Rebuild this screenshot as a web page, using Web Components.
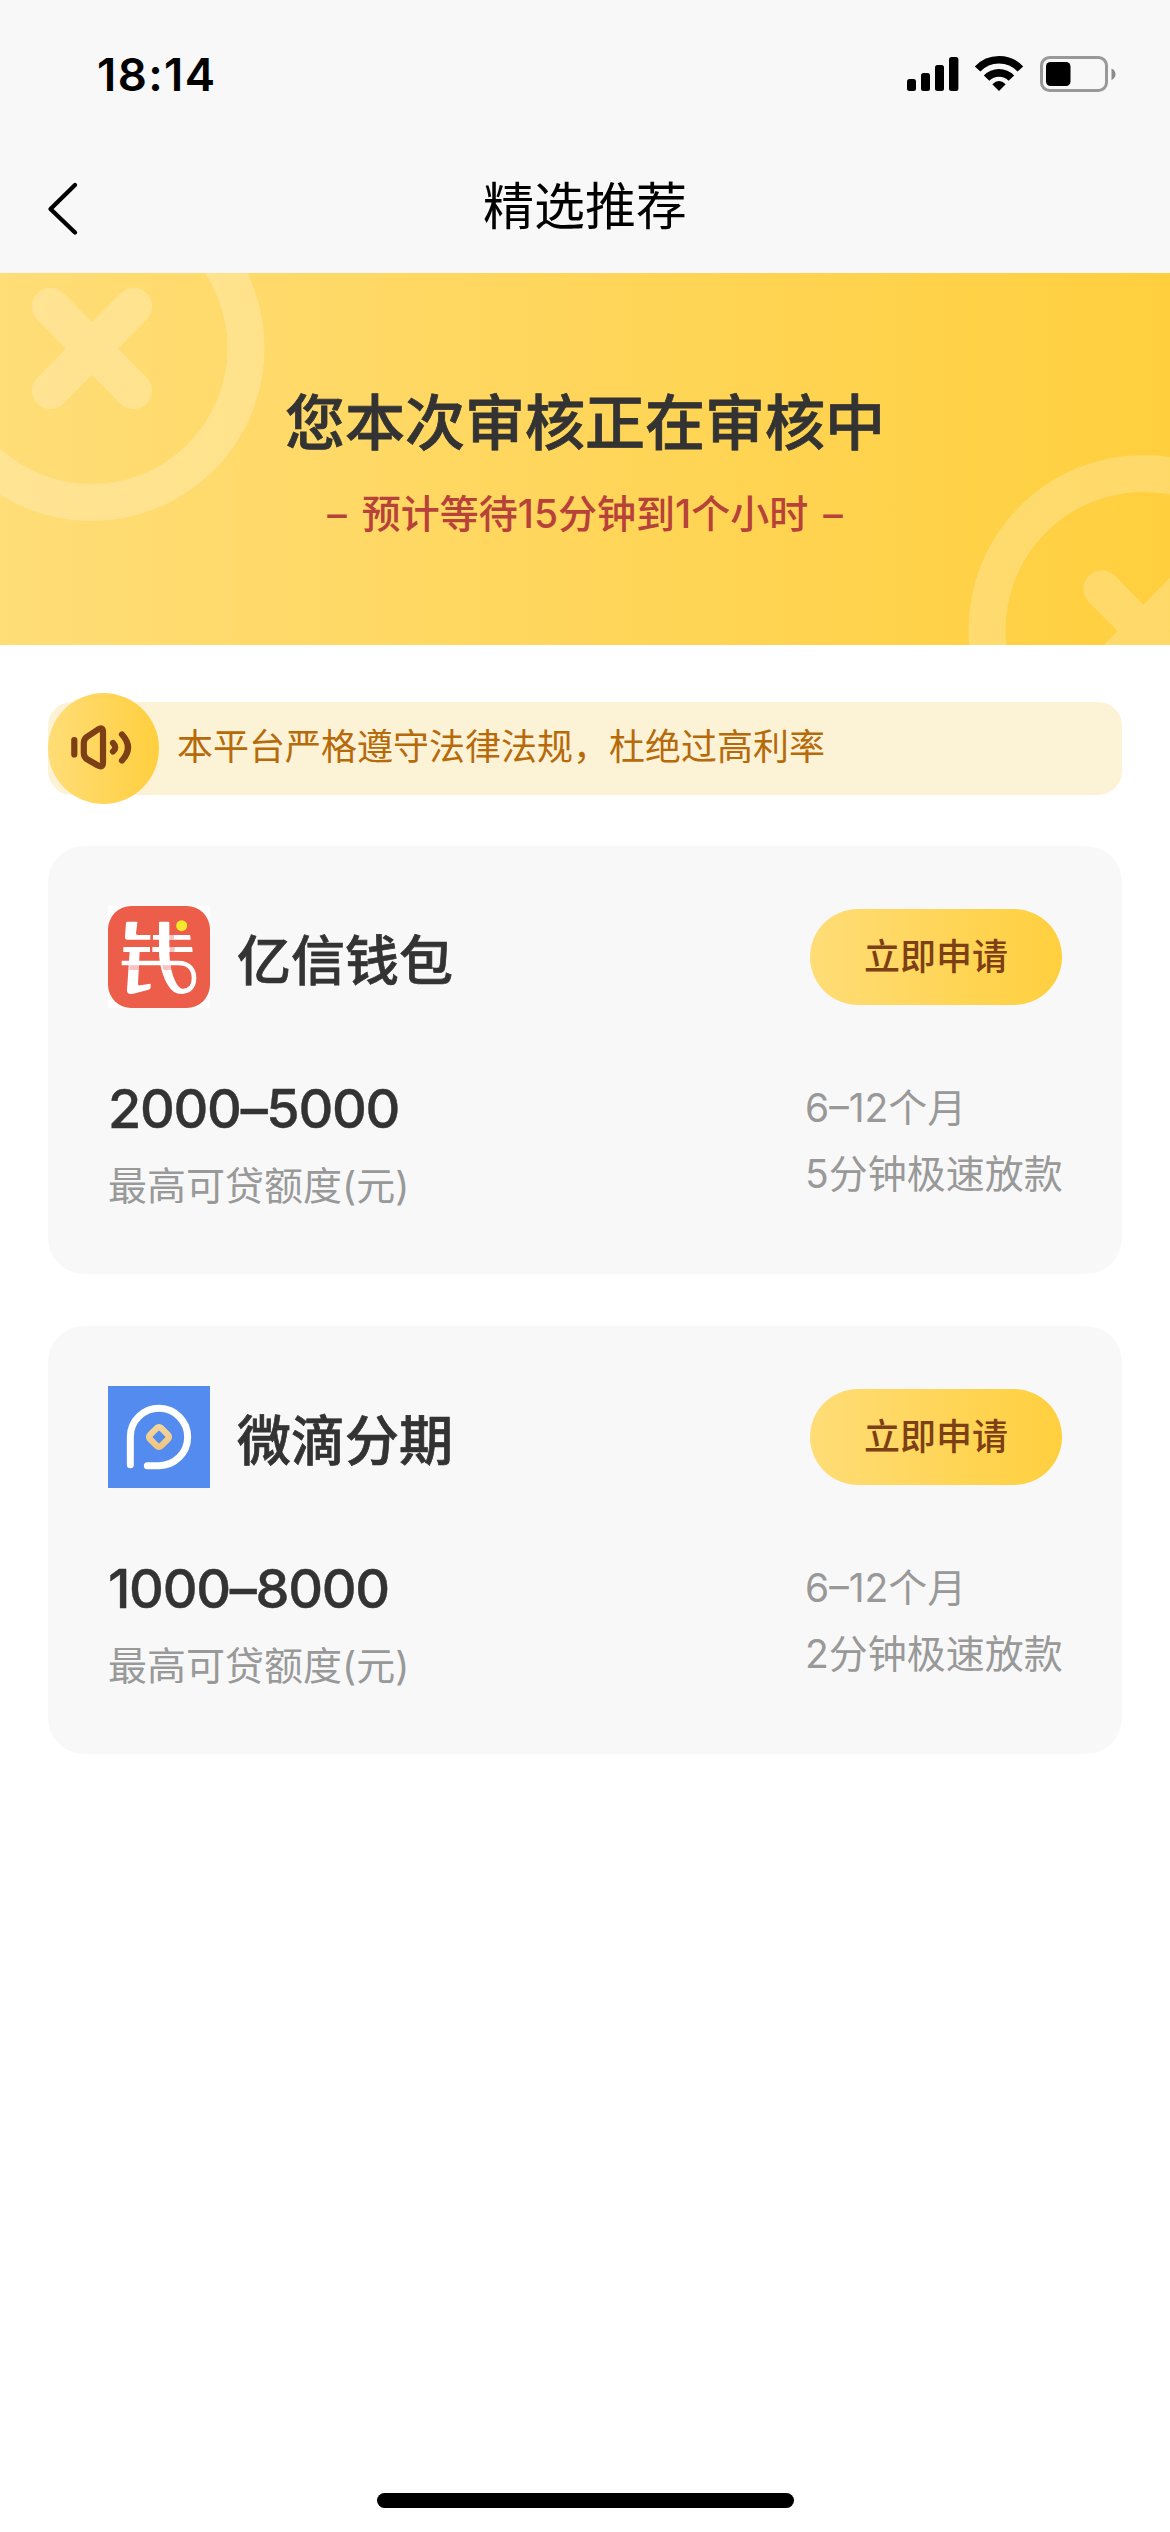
<!DOCTYPE html>
<html lang="zh-CN">
<head>
<meta charset="utf-8">
<title>精选推荐</title>
<style>
html,body{margin:0;padding:0;background:#fff}
body{width:1170px;height:2532px;overflow:hidden;font-family:Inter,"Noto Sans CJK SC",sans-serif}
</style>
</head>
<body>
<loan-app></loan-app>
<script>
const define=(name,html)=>customElements.define(name,class extends HTMLElement{
  constructor(){super();this.attachShadow({mode:'open'}).innerHTML=html;}
});

define('status-bar',`<style>
:host{display:flex;height:147px;box-sizing:border-box;padding:0 54px 0 97px;justify-content:space-between;align-items:center;background:#f8f8f8;color:#000}
time{font-size:45.5px;font-weight:600;line-height:60px;letter-spacing:1.400px;margin-top:2px}
svg{display:block}
</style>
<time>18:14</time>
<svg width="210" height="40" viewBox="906 54 210 40">
<rect x="907" y="79" width="9" height="12" rx="2.5"/><rect x="921" y="73" width="9" height="18" rx="2.5"/><rect x="935" y="65" width="9" height="26" rx="2.5"/><rect x="949" y="57" width="9.4" height="34" rx="2.5"/>
<g fill="none" stroke="#000" stroke-width="7.6"><path d="M977.6 69A29.3 29.3 0 0 1 1020.4 69"/><path d="M986.600 78.200A17 17 0 0 1 1011.400 78.200"/></g>
<path d="M992.3 84.2Q999 77.600 1005.700 84.2L999 91Z"/>
<rect x="1041.500" y="57.500" width="65" height="33" rx="8" fill="none" stroke="#999" stroke-width="3"/>
<rect x="1046" y="62" width="24.500" height="24" rx="4.500"/><path d="M1111.500 68.500Q1115.500 70.500 1115.500 74.200T1111.500 80Z" fill="#8b8b8b"/>
</svg>`);

define('nav-bar',`<style>
:host{display:grid;grid-template-columns:120px 1fr 120px;height:126px;align-items:center;background:#f8f8f8;color:#000}
svg{display:block;margin:0 0 3px 44px}
h1{margin:0 0 6px;text-align:center;font-size:51px;line-height:70px;font-weight:400}
</style>
<svg width="40" height="60" viewBox="44 179 40 60"><path d="M75 185L50.500 209L75 232.500" fill="none" stroke="#000" stroke-width="4.300" stroke-linecap="round" stroke-linejoin="round"/></svg>
<h1><slot></slot></h1>`);

define('review-banner',`<style>
:host{display:grid;height:372px;background:linear-gradient(90deg,#ffdd77,#ffcf3e);overflow:hidden}
svg,.copy{grid-area:1/1}
svg{display:block}
.copy{display:flex;flex-direction:column;align-items:center;padding-top:108px}
.title{font-size:60px;line-height:84px;font-weight:500;color:#333;-webkit-text-stroke:.8px #333}
.sub{font-size:39px;line-height:60px;margin-top:19px;font-weight:500;color:#b7423a;white-space:pre;word-spacing:4.500px}
</style>
<svg width="1170" height="372" viewBox="0 273 1170 372"><g fill="none" stroke="#fff" stroke-opacity=".22" stroke-width="37" stroke-linecap="round">
<circle cx="91.500" cy="348" r="154.500"/><path d="M50.500 306.500L133.500 390.500M133.500 306.500L50.500 390.500"/>
<circle cx="1143.500" cy="630" r="156.500"/><path d="M1102 589L1185 673M1185 589L1102 673"/></g></svg>
<div class="copy"><div class="title"><slot name="title"></slot></div><div class="sub"><slot name="sub"></slot></div></div>`);

define('notice-bar',`<style>
:host{display:flex;align-items:center;height:93px;margin:57px 48px 51px;border-radius:24px;background:#fcf2d6;color:#b66a0a}
svg{display:block;flex:none;margin:-9px 18px -9px 0}
span{font-size:36px;line-height:50px;margin-top:-4px}
</style>
<svg width="111" height="111" viewBox="48 693 111 111"><defs><linearGradient id="g"><stop stop-color="#ffdd77"/><stop offset="1" stop-color="#ffcf3e"/></linearGradient></defs>
<circle cx="103.500" cy="748.500" r="55.500" fill="url(#g)"/>
<g fill="none" stroke="#7c3f16" stroke-width="6.200" stroke-linecap="round" stroke-linejoin="round"><path d="M74.300 740V754.500M83.800 743Q83.800 738.500 87.500 736.500L98 729.500Q103 726.500 103 732V762.500Q103 768 98 765.500L87.500 759.500Q83.800 757.500 83.800 753ZM113 743Q117.500 747.500 113 751.500M122 734.500Q134 747.500 122 760.500"/></g></svg>
<span><slot></slot></span>`);

define('wallet-logo',`<style>:host{display:block;background:#fff}svg{display:block}</style>
<svg width="102" height="102" viewBox="54 48 306 306"><rect x="54" y="48" width="306" height="306" rx="70" fill="#ec5d4a"/>
<g fill="#fff"><path d="M112 95H139Q143 95 142 99L138 130Q138 135 143 135H181V149H112Q104 149 105 141L108 99Q108 95 112 95Z"/>
<rect x="100" y="171" width="80" height="15"/><path d="M119 183H149L144 281Q144 287 150 286L182 281V291Q182 297 176 299L130 311Q110 315 111 301Z"/>
<path d="M189 135H300Q302 142 302 149H189ZM187 171H306Q308 178 308 186H187Z"/></g>
<path d="M95 219H264C302 219 312 243 312 265C312 292 295 304 276 304C240 304 232 250 228 222Q223 194 222.500 160" fill="none" stroke="#fff" stroke-width="14"/>
<path d="M207 98Q207 95 210 95H235Q238 95 238 98V185Q239 241 257 276Q266 296 281 298V311Q251 315 235 287C219 263 207 220 207 185Z" fill="#fff"/>
<path d="M119 226H147V240H118ZM217 226H242V240H220ZM238 135H252V149H238ZM239 171H254V186H239Z" fill="#f9c2c5"/>
<circle cx="275" cy="107" r="16.500" fill="#f4e72c"/></svg>`);

define('drop-logo',`<style>:host,svg{display:block}</style>
<svg width="102" height="102" viewBox="54 48 306 306"><defs><linearGradient id="d" x2="1" y2="1"><stop stop-color="#f7d9a0"/><stop offset="1" stop-color="#edc27c"/></linearGradient></defs>
<rect x="54" y="48" width="306" height="306" fill="#548bef"/>
<path d="M121 284V199A86 86 0 1 1 207 287H172" fill="none" stroke="#fff" stroke-width="21" stroke-linecap="round"/>
<rect x="174" y="168" width="66" height="66" rx="18" transform="rotate(45 207 201)" fill="url(#d)"/><rect x="193" y="187" width="28" height="28" rx="2" transform="rotate(45 207 201)" fill="#548bef"/></svg>`);

define('apply-button',`<style>
:host{display:block}
button{display:flex;align-items:center;justify-content:center;width:252px;height:96px;border:0;border-radius:48px;padding:0;background:linear-gradient(90deg,#ffdd77,#ffcf3e);color:#7c3f16;font:500 36px/50px Inter,"Noto Sans CJK SC",sans-serif}
</style><button><slot></slot></button>`);

define('loan-card',`<style>
:host{display:block;height:428px;box-sizing:border-box;margin:0 48px 52px;padding:60px;border-radius:36px;background:#f8f8f8}
.head,.body{display:flex;justify-content:space-between}
.head{height:102px;align-items:center}
.brand{display:flex;align-items:center;gap:27px}
.name{font-size:54px;line-height:74px;font-weight:500;color:#333;margin-top:9px;-webkit-text-stroke:.7px #333}
.body{margin-top:64px}
.amount{font-size:54px;line-height:74px;font-weight:500;color:#333;letter-spacing:-1.300px;-webkit-text-stroke:.4px #333}
.label,.terms{font-size:39px;color:#999;font-weight:400}
.label{line-height:56px;margin-top:12px}
.terms{width:257px;line-height:66px;margin-top:3px;white-space:nowrap}
</style>
<div class="head"><div class="brand"><slot name="logo"></slot><div class="name"><slot name="name"></slot></div></div><apply-button>立即申请</apply-button></div>
<div class="body"><div><div class="amount"><slot name="amount"></slot></div><div class="label">最高可贷额度(元)</div></div>
<div class="terms"><div><slot name="term"></slot></div><div><slot name="speed"></slot></div></div></div>`);

define('home-indicator',`<style>:host{display:flex;justify-content:center;padding-bottom:24px}i{display:block;width:417px;height:15px;border-radius:8px;background:#000}</style><i></i>`);

define('loan-app',`<style>
:host{display:flex;flex-direction:column;height:2532px;background:#fff}
home-indicator{margin-top:auto}
</style>
<status-bar></status-bar><nav-bar>精选推荐</nav-bar>
<review-banner><span slot="title">您本次审核正在审核中</span><span slot="sub">–&nbsp;预计等待15分钟到1个小时&nbsp;–</span></review-banner>
<notice-bar>本平台严格遵守法律法规，杜绝过高利率</notice-bar>
<loan-card><wallet-logo slot="logo"></wallet-logo><span slot="name">亿信钱包</span><span slot="amount">2000–5000</span><span slot="term">6–12个月</span><span slot="speed">5分钟极速放款</span></loan-card>
<loan-card><drop-logo slot="logo"></drop-logo><span slot="name">微滴分期</span><span slot="amount">1000–8000</span><span slot="term">6–12个月</span><span slot="speed">2分钟极速放款</span></loan-card>
<home-indicator></home-indicator>`);
</script>
</body>
</html>
